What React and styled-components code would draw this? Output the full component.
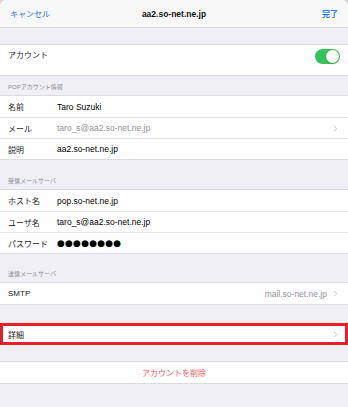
import React, { useState } from 'react'
import styled, { createGlobalStyle } from 'styled-components'

const GlobalStyle = createGlobalStyle`
  html, body {
    margin: 0;
    padding: 0;
    background: #d6d6da;
  }
  body {
    font-family: "Liberation Sans", "Noto Sans CJK JP", sans-serif;
    -webkit-font-smoothing: antialiased;
  }
`

const Sheet = styled.div`
  width: 348px;
  height: 407px;
  background: #efeff4;
  border-radius: 6px 6px 0 0;
  overflow: hidden;
  display: flex;
  flex-direction: column;
`

const NavBar = styled.div`
  height: 28px;
  flex-shrink: 0;
  background: #f8f8f8;
  border-bottom: 1px solid #dcdce0;
  box-sizing: border-box;
  display: grid;
  grid-template-columns: 1fr auto 1fr;
  align-items: center;
  padding: 0 10px;
`

const NavButton = styled.span`
  font-size: 8px;
  color: #1e7cf0;
  justify-self: ${p => (p.end ? 'end' : 'start')};
  font-weight: ${p => (p.bold ? 700 : 400)};
`

const NavTitle = styled.span`
  font-size: 8.5px;
  font-weight: 700;
  color: #111;
`

const Section = styled.div`
  padding-top: ${p => p.gap}px;
  display: flex;
  flex-direction: column;
  flex-shrink: 0;
`

const SectionTitle = styled.div`
  height: 9px;
  line-height: 9px;
  margin-bottom: 3px;
  font-size: 6px;
  color: #8a8a8f;
  padding: 0 8px;
`

const Group = styled.div`
  background: #fff;
  border-top: 1px solid #dcdce0;
  border-bottom: 1px solid #dcdce0;
`

const Row = styled.div`
  height: ${p => p.h || 21}px;
  box-sizing: border-box;
  display: flex;
  align-items: ${p => (p.top ? 'flex-start' : 'center')};
  padding: ${p => (p.top ? '4px 8px 0 8px' : '0 8px')};
  & + & {
    border-top: 1px solid #e3e3e6;
  }
  ${p => p.marked && `
    height: 22px;
    border: 3px solid #e5202b;
    margin: -1px 0;
    padding: 0 5px;
  `}
`

const Label = styled.span`
  width: 49px;
  flex-shrink: 0;
  font-size: 8px;
  color: #1c1c1e;
  white-space: nowrap;
  flex: ${p => (p.grow ? 1 : 'none')};
`

const Value = styled.span`
  flex: 1;
  font-size: ${p => (p.dots ? 9 : 8.5)}px;
  color: ${p => (p.muted ? '#939398' : '#000')};
  text-align: ${p => (p.right ? 'right' : 'left')};
  letter-spacing: ${p => (p.dots ? '0.2px' : 'normal')};
  font-family: ${p => (p.dots ? '"DejaVu Sans", sans-serif' : 'inherit')};
`

const Chevron = styled.svg`
  width: 5px;
  height: 7px;
  margin-left: 6px;
  margin-right: 2px;
  flex-shrink: 0;
`

const Toggle = styled.div`
  width: 25px;
  height: 15px;
  border-radius: 8px;
  background: #33c35a;
  position: relative;
  margin-left: auto;
  cursor: pointer;
  &::after {
    content: '';
    position: absolute;
    top: 1px;
    left: ${p => (p.on ? '11px' : '1px')};
    width: 13px;
    height: 13px;
    border-radius: 50%;
    background: #fff;
    box-shadow: 0 1px 2px rgba(0,0,0,0.2);
  }
`

const DeleteButton = styled.div`
  height: 21px;
  display: flex;
  align-items: center;
  justify-content: center;
  font-size: 8px;
  color: #f2575a;
`

const Arrow = () => (
  <Chevron viewBox="0 0 5 7">
    <path d="M1 0.8 L3.8 3.5 L1 6.2" fill="none" stroke="#c4c4c8" strokeWidth="1" />
  </Chevron>
)

export default function App() {
  const [on, setOn] = useState(true)
  return (
    <>
      <GlobalStyle />
      <Sheet>
        <NavBar>
          <NavButton>キャンセル</NavButton>
          <NavTitle>aa2.so-net.ne.jp</NavTitle>
          <NavButton end bold>完了</NavButton>
        </NavBar>

        <Section gap={16}>
          <Group>
            <Row h={30} top>
              <Label grow>アカウント</Label>
              <Toggle on={on} onClick={() => setOn(!on)} />
            </Row>
          </Group>
        </Section>

        <Section gap={7}>
          <SectionTitle>POPアカウント情報</SectionTitle>
          <Group>
            <Row>
              <Label>名前</Label>
              <Value>Taro Suzuki</Value>
            </Row>
            <Row>
              <Label>メール</Label>
              <Value muted>taro_s@aa2.so-net.ne.jp</Value>
              <Arrow />
            </Row>
            <Row>
              <Label>説明</Label>
              <Value>aa2.so-net.ne.jp</Value>
            </Row>
          </Group>
        </Section>

        <Section gap={17}>
          <SectionTitle>受信メールサーバ</SectionTitle>
          <Group>
            <Row>
              <Label>ホスト名</Label>
              <Value>pop.so-net.ne.jp</Value>
            </Row>
            <Row>
              <Label>ユーザ名</Label>
              <Value>taro_s@aa2.so-net.ne.jp</Value>
            </Row>
            <Row>
              <Label>パスワード</Label>
              <Value dots>●●●●●●●●</Value>
            </Row>
          </Group>
        </Section>

        <Section gap={16}>
          <SectionTitle>送信メールサーバ</SectionTitle>
          <Group>
            <Row>
              <Label>SMTP</Label>
              <Value muted right>mail.so-net.ne.jp</Value>
              <Arrow />
            </Row>
          </Group>
        </Section>

        <Section gap={18}>
          <Group>
            <Row marked>
              <Label grow>詳細</Label>
              <Arrow />
            </Row>
          </Group>
        </Section>

        <Section gap={16}>
          <Group>
            <DeleteButton>アカウントを削除</DeleteButton>
          </Group>
        </Section>
      </Sheet>
    </>
  )
}
